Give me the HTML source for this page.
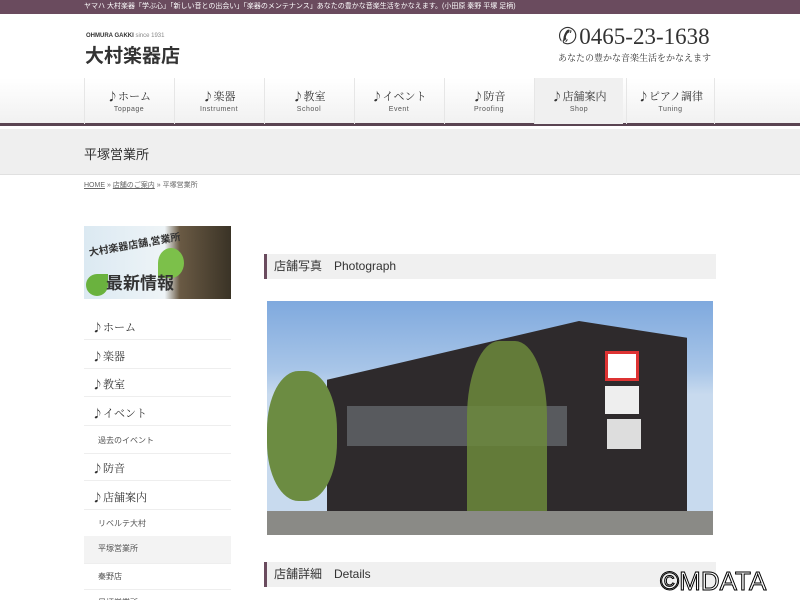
<!DOCTYPE html><html><head><meta charset="utf-8"><style>
*{margin:0;padding:0;box-sizing:border-box}
html,body{width:800px;height:600px;overflow:hidden}
body{background:#fff;font-family:"Liberation Sans","Noto Sans CJK JP",sans-serif;color:#333;position:relative}
.top{height:14px;background:#6a4b5e;color:#fff;font-size:7px;line-height:14px;padding-left:84px}
.hdr{position:absolute;top:14px;left:0;width:800px;height:64px}
.nav{position:absolute;top:78px;left:0;width:800px;height:48px;background:linear-gradient(#fff,#f1f1f1);border-bottom:3px solid #5a4452}
.nav div{position:absolute;top:0;width:89px;height:46px;border-left:1px solid #e6e6e6;text-align:center;font-family:"Noto Serif CJK SC",serif;font-size:11px;color:#333;padding-top:13px;line-height:11px}
.nav div small{display:block;font-family:"Liberation Sans",sans-serif;font-size:7px;color:#555;margin-top:2px;letter-spacing:.5px}
.band{position:absolute;top:129px;left:0;width:800px;height:46px;background:#efefef;border-bottom:1px solid #e0e0e0}
.side a{display:block;position:absolute;left:84px;width:147px;font-family:"Noto Serif CJK SC",serif;font-size:11px;color:#333;border-bottom:1px solid #eee;padding-left:8px;padding-top:3px}
.side a.s{font-family:"Liberation Sans","Noto Sans CJK JP",sans-serif;font-size:8px;color:#555;padding-left:14px}
.h2{position:absolute;left:264px;width:452px;height:25px;background:#f0f0f0;border-left:3px solid #6a4b5e;font-size:12px;line-height:25px;padding-left:7px;color:#333}
</style></head><body>
<div class="top">ヤマハ 大村楽器「学ぶ心」「新しい音との出会い」「楽器のメンテナンス」あなたの豊かな音楽生活をかなえます。(小田原 秦野 平塚 足柄)</div>
<div class="hdr">
<div style="position:absolute;left:86px;top:19px;font-size:6px;font-weight:bold;color:#333">OHMURA GAKKI <span style="font-weight:normal;color:#888">since 1931</span></div>
<div style="position:absolute;left:85px;top:27px;font-size:19px;font-weight:bold;color:#333">大村楽器店</div>
<div style="position:absolute;left:558px;top:10px;font-size:23px;font-family:'Liberation Serif',serif;color:#333">&#9990;<span style="margin-left:2px">0465-23-1638</span></div>
<div style="position:absolute;left:558px;top:37px;font-size:9px;font-family:'Noto Serif CJK SC',serif;color:#333">あなたの豊かな音楽生活をかなえます</div>
</div>
<div class="nav">
<div style="left:84px">♪ホーム<small>Toppage</small></div>
<div style="left:174px">♪楽器<small>Instrument</small></div>
<div style="left:264px">♪教室<small>School</small></div>
<div style="left:354px">♪イベント<small>Event</small></div>
<div style="left:444px">♪防音<small>Proofing</small></div>
<div style="left:534px;background:#f0f0f0">♪店舗案内<small>Shop</small></div>
<div style="left:626px;border-right:1px solid #e6e6e6">♪ピアノ調律<small>Tuning</small></div>
</div>
<div class="band"><div style="position:absolute;left:84px;top:15px;font-size:13px;color:#333">平塚営業所</div></div>
<div style="position:absolute;left:84px;top:180px;font-size:7px;color:#666"><u>HOME</u> » <u>店舗のご案内</u> » 平塚営業所</div>
<div style="position:absolute;left:84px;top:226px;width:147px;height:73px;background:linear-gradient(90deg,#dbe9f2 0%,#eef4f7 55%,#6a5a44 65%,#3a3326 100%)">
<div style="position:absolute;left:4px;top:10px;font-size:10px;font-weight:bold;transform:rotate(-10deg)">大村楽器店舗,営業所</div>
<div style="position:absolute;left:74px;top:22px;width:26px;height:30px;background:#7cc04a;border-radius:50% 50% 50% 0"></div>
<div style="position:absolute;left:2px;top:48px;width:22px;height:22px;background:#6ab23e;border-radius:50% 0 50% 50%"></div>
<div style="position:absolute;left:22px;top:43px;font-size:17px;font-weight:bold;color:#333">最新情報</div>
</div>
<div class="side">
<a style="top:316px;height:24px">♪ホーム</a>
<a style="top:345px;height:24px">♪楽器</a>
<a style="top:373px;height:24px">♪教室</a>
<a style="top:402px;height:24px">♪イベント</a>
<a class="s" style="top:432px;height:22px">過去のイベント</a>
<a style="top:457px;height:24px">♪防音</a>
<a style="top:486px;height:24px">♪店舗案内</a>
<a class="s" style="top:515px;height:22px">リベルテ大村</a>
<a class="s" style="top:536px;height:28px;background:#f3f3f3;padding-top:7px">平塚営業所</a>
<a class="s" style="top:568px;height:22px">秦野店</a>
<a class="s" style="top:594px;height:22px">足柄営業所</a>
</div>
<div class="h2" style="top:254px">店舗写真　Photograph</div>
<div style="position:absolute;left:267px;top:301px;width:446px;height:234px;background:linear-gradient(#7fa9de 0%,#a9c6e8 30%,#c8daee 40%,#c8daee 100%);overflow:hidden">
<div style="position:absolute;left:60px;top:20px;width:360px;height:210px;background:#2e2a2c;clip-path:polygon(0 28%,70% 0,100% 8%,100% 100%,0 100%)"></div>
<div style="position:absolute;left:80px;top:105px;width:220px;height:40px;background:#585a5e"></div>
<div style="position:absolute;left:200px;top:40px;width:80px;height:190px;background:#6c8a3c;border-radius:40% 40% 10% 10%;opacity:.85"></div>
<div style="position:absolute;left:0px;top:70px;width:70px;height:130px;background:#6c8c42;border-radius:45%"></div>
<div style="position:absolute;left:338px;top:50px;width:34px;height:30px;background:#fff;border:3px solid #d33"></div>
<div style="position:absolute;left:338px;top:85px;width:34px;height:28px;background:#eee"></div>
<div style="position:absolute;left:340px;top:118px;width:34px;height:30px;background:#ddd"></div>
<div style="position:absolute;left:0;top:210px;width:446px;height:24px;background:#8a8a86"></div>
</div>
<div class="h2" style="top:562px">店舗詳細　Details</div>
<div style="position:absolute;left:660px;top:566px;font-size:26px;color:#fff;-webkit-text-stroke:1px #000">©MDATA</div>
</body></html>
